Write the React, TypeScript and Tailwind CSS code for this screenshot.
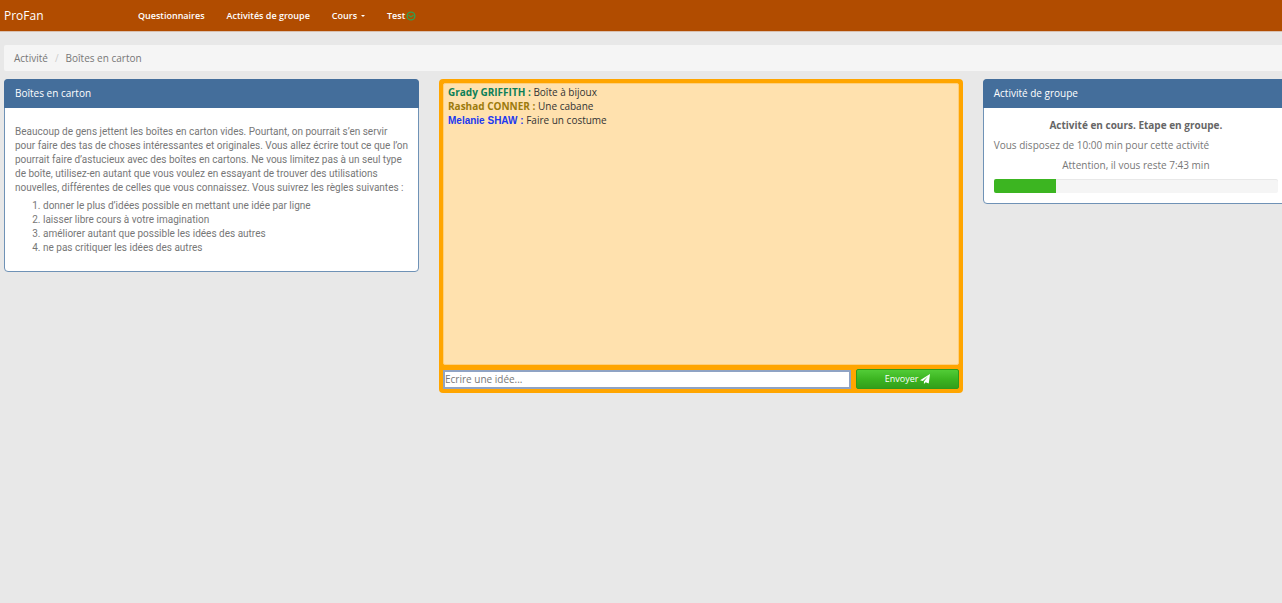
import React, { useState } from 'react';

interface Message {
  auteur: string;
  texte: string;
  couleur: string;
}

interface PanelProps {
  title: string;
  children: React.ReactNode;
}

const initialMessages: Message[] = [
  { auteur: 'Grady GRIFFITH :', texte: 'Boîte à bijoux', couleur: 'text-[#0c8058]' },
  { auteur: 'Rashad CONNER :', texte: 'Une cabane', couleur: 'text-[#9c7a0c]' },
  { auteur: 'Melanie SHAW :', texte: 'Faire un costume', couleur: 'text-[#2138f0] font-["Liberation_Sans",sans-serif]' }
];

const regles = [
  'donner le plus d’idées possible en mettant une idée par ligne',
  'laisser libre cours à votre imagination',
  'améliorer autant que possible les idées des autres',
  'ne pas critiquer les idées des autres'
];

const Panel: React.FC<PanelProps> = ({ title, children }) => (
  <section className="rounded border border-[#6f92b6] bg-white">
    <h2 className="-m-px rounded-t bg-[#446e9b] px-[11px] pt-[7px] pb-2 text-white">{title}</h2>
    {children}
  </section>
);

const Navbar: React.FC = () => (
  <nav className="flex h-8 items-center border-b border-[#d9c0b0] bg-[#b14c00] text-white">
    <a href="#" className="w-[128px] pl-1 text-[12px]">ProFan</a>
    <div className="flex gap-[22px] px-2.5 text-[9px] font-semibold">
      <a href="#">Questionnaires</a>
      <a href="#">Activités de groupe</a>
      <button type="button" className="flex items-center gap-1">
        Cours
        <span className="border-x-2 border-t-2 border-x-transparent border-t-white" />
      </button>
      <a href="#" className="flex items-center gap-px">
        Test
        <svg viewBox="0 0 16 16" className="size-2.5" fill="none" stroke="#33a04f" strokeWidth="2.2">
          <circle cx="8" cy="8" r="6.2" />
          <path d="M4 6.5 8 9.5l4-3" />
        </svg>
      </a>
    </div>
  </nav>
);

const Chat: React.FC = () => {
  const [messages, setMessages] = useState<Message[]>(initialMessages);
  const [idee, setIdee] = useState('');

  const handleSubmit = (e: React.FormEvent) => {
    e.preventDefault();
    if (!idee.trim()) return;
    setMessages([...messages, { auteur: 'Melanie SHAW :', texte: idee, couleur: initialMessages[2].couleur }]);
    setIdee('');
  };

  return (
    <section className="rounded-sm bg-[#ffa500] p-1">
      <div className="h-[282px] overflow-y-auto rounded-xs border border-[#ffcf7c] bg-[#ffe1ae] px-1 py-px text-[#333]">
        {messages.map((message, index) => (
          <p key={index}>
            <strong className={message.couleur}>{message.auteur}</strong> {message.texte}
          </p>
        ))}
      </div>
      <form onSubmit={handleSubmit} className="flex items-center gap-[5px] pt-1">
        <input
          type="text"
          aria-label="Idée"
          placeholder="Ecrire une idée..."
          value={idee}
          onChange={(e) => setIdee(e.target.value)}
          autoFocus
          className="h-[19px] min-w-0 flex-1 border-2 border-[#8fa3c4] bg-white text-[#333] outline-none placeholder:text-[#777]"
        />
        <button
          type="submit"
          className="flex h-5 w-1/5 items-center justify-center gap-px rounded-xs border border-[#2f9a1b] bg-linear-to-b from-[#52cc37] via-[#3cb521] to-[#339f1b] text-[9px] text-white"
        >
          Envoyer
          <svg viewBox="0 0 16 16" className="size-2.5" fill="currentColor">
            <path d="M16 0 0 10l4.5 1.2L12.5 4 6.3 12v4l2.7-3 5 2z" />
          </svg>
        </button>
      </form>
    </section>
  );
};

const App: React.FC = () => {
  const progression = 22;

  return (
    <div className="min-h-screen overflow-x-hidden bg-[#e8e8e8] font-['Open_Sans',sans-serif] text-[10px] leading-[14px] text-[#777]">
      <Navbar />

      {/* The page content runs slightly past the right edge of the window */}
      <main className="-mr-[7px] pt-[13px] pl-1">
        <ol className="flex rounded-xs bg-[#f5f5f5] px-2.5 py-1.5">
          <li><a href="#">Activité</a></li>
          <li className="px-[7px] text-[#ccc]">/</li>
          <li>Boîtes en carton</li>
        </ol>

        <div className="mt-2 grid grid-cols-12 items-start gap-5">
          <div className="col-span-4">
            <Panel title="Boîtes en carton">
              <div className="pt-[18px] pr-2 pb-4 pl-2.5 font-['Roboto',sans-serif]">
                <p>
                  Beaucoup de gens jettent les boîtes en carton vides. Pourtant, on pourrait s’en servir
                  <br />
                  pour faire des tas de choses intéressantes et originales. Vous allez écrire tout ce que l’on
                  pourrait faire d’astucieux avec des boîtes en cartons. Ne vous limitez pas à un seul type
                  de boîte, utilisez-en autant que vous voulez en essayant de trouver des utilisations
                  nouvelles, différentes de celles que vous connaissez. Vous suivrez les règles suivantes :
                </p>
                <ol className="mt-1 list-decimal pl-7">
                  {regles.map((regle) => (
                    <li key={regle}>{regle}</li>
                  ))}
                </ol>
              </div>
            </Panel>
          </div>

          <div className="col-span-5">
            <Chat />
          </div>

          <div className="col-span-3">
            <Panel title="Activité de groupe">
              <div className="space-y-1.5 px-2.5 pt-[11px] pb-2.5">
                <p className="text-center font-bold text-[#666]">Activité en cours. Etape en groupe.</p>
                <p>Vous disposez de 10:00 min pour cette activité</p>
                <p className="text-center">Attention, il vous reste 7:43 min</p>
                <div
                  role="progressbar"
                  aria-label="Temps écoulé"
                  aria-valuenow={progression}
                  className="mt-[7px] h-3.5 overflow-hidden rounded-xs bg-[#f5f5f5] inset-shadow-2xs"
                >
                  <div className="h-full bg-[#3cb521]" style={{ width: `${progression}%` }} />
                </div>
              </div>
            </Panel>
          </div>
        </div>
      </main>
    </div>
  );
};

export default App;
